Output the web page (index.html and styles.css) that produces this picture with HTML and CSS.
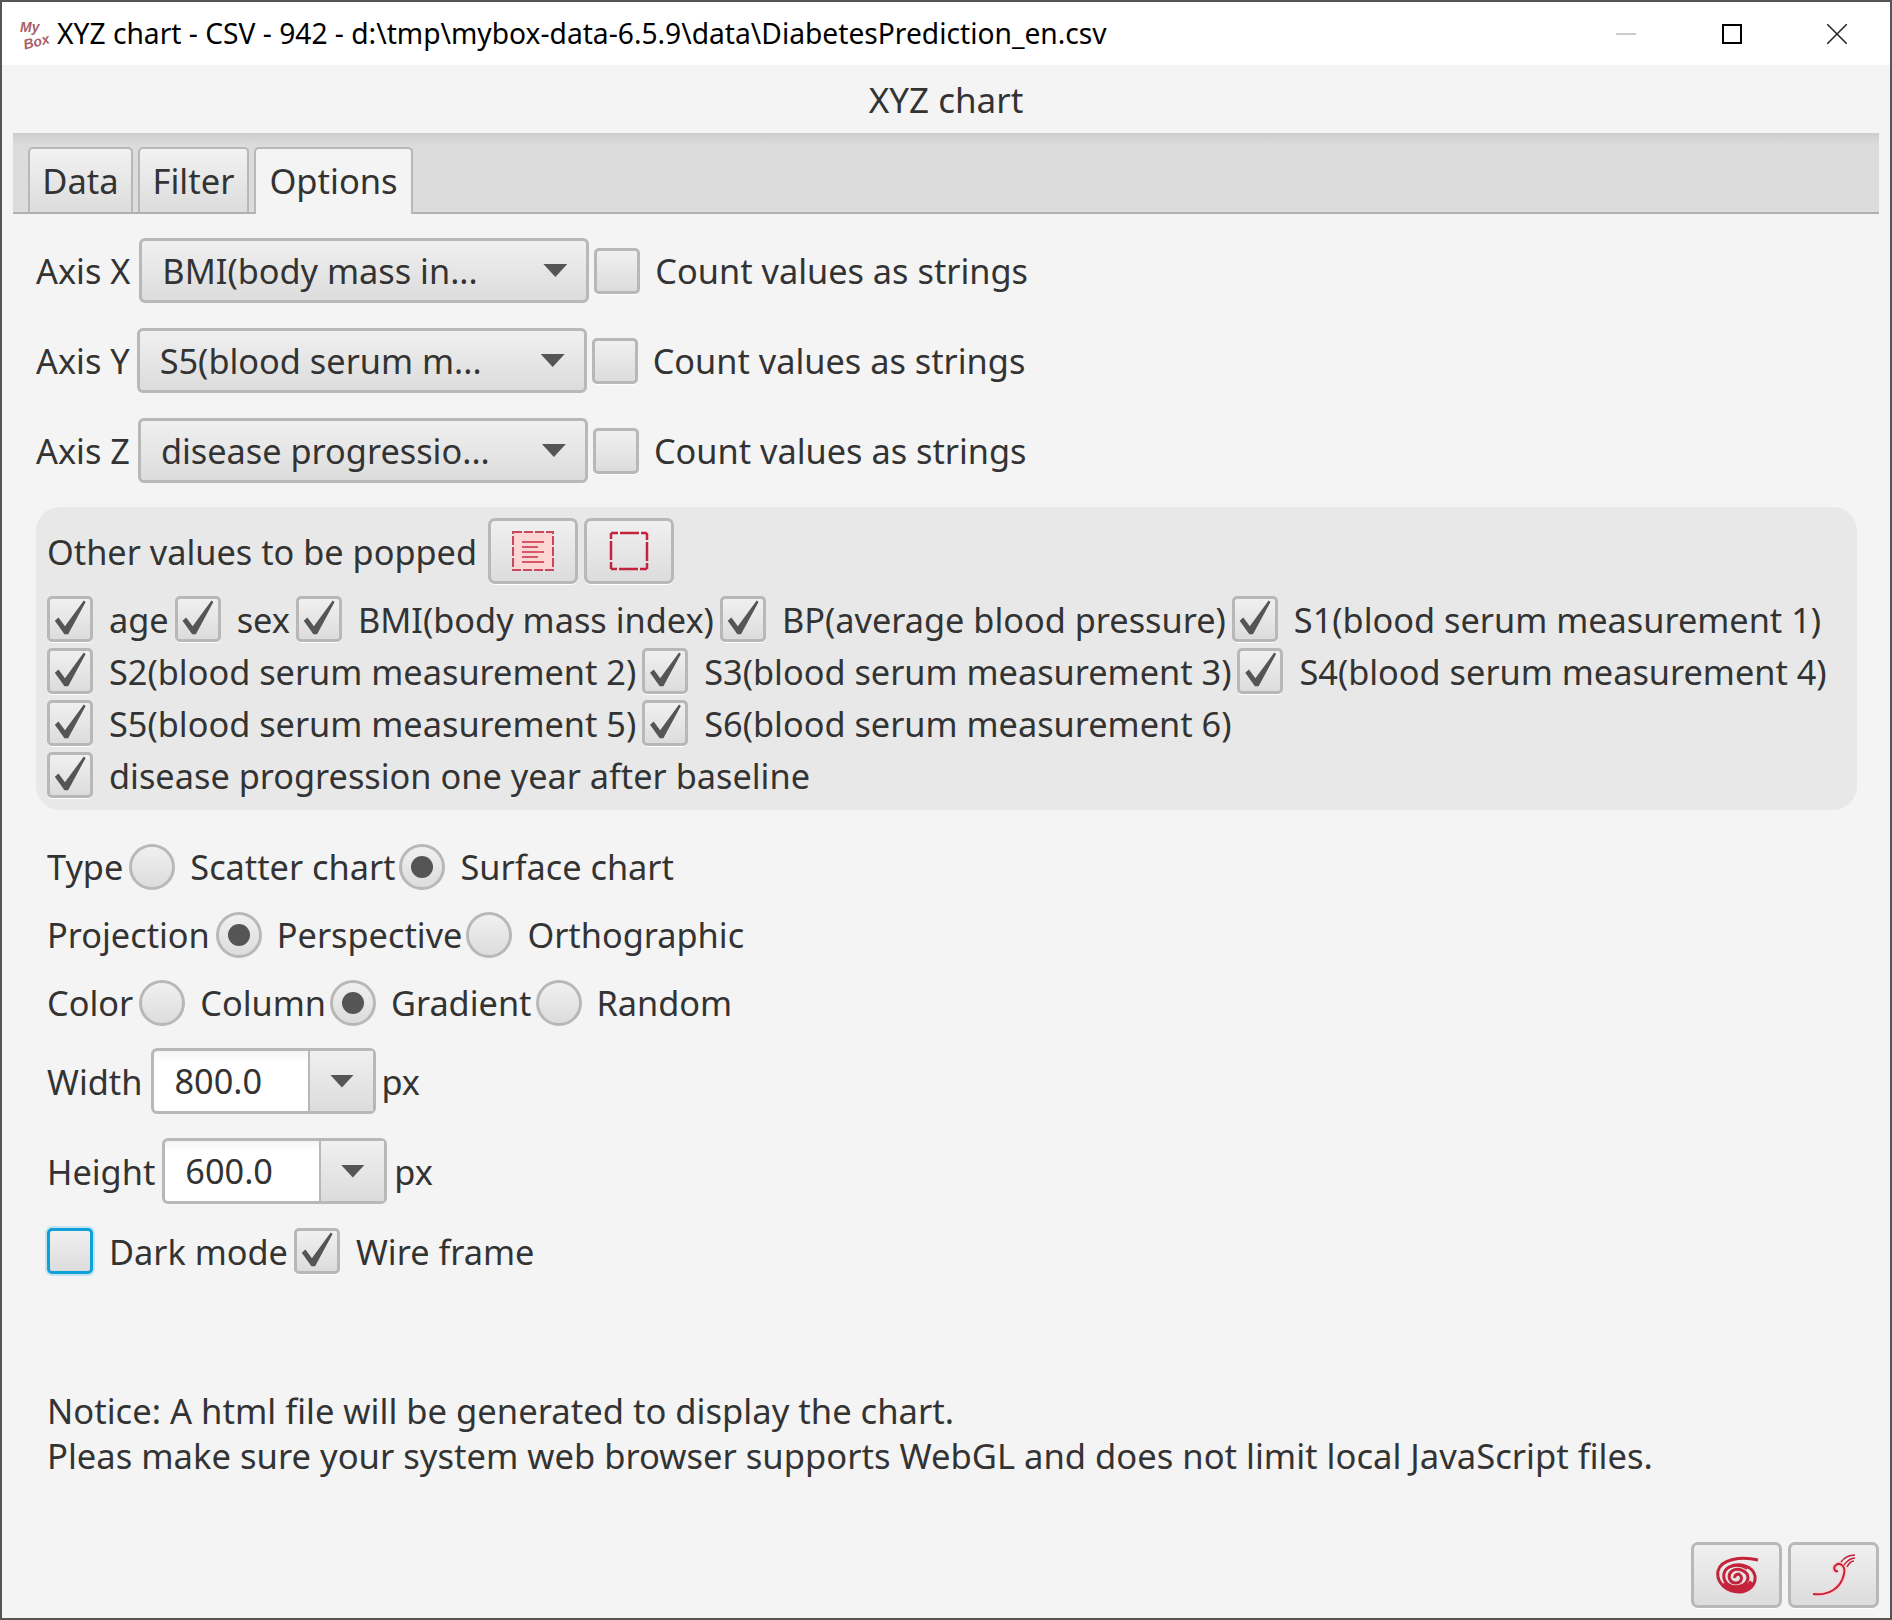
FILE: index.html
```html
<!DOCTYPE html>
<html lang="en">
<head>
  <meta charset="UTF-8">
  <title>XYZ chart</title>
  <link rel="stylesheet" href="styles.css">
</head>
<body>
  <div class="window">
    <div class="titlebar">
      <div class="logo"><span>My</span><span class="logo-b">Box</span></div>
      <div class="title">XYZ chart - CSV - 942 - d:\tmp\mybox-data-6.5.9\data\DiabetesPrediction_en.csv</div>
      <div class="winbtns">
        <svg width="20" height="20"><rect x="0" y="9" width="20" height="2" fill="#cccccc"/></svg>
        <svg width="20" height="20"><rect x="1" y="1" width="18" height="18" fill="none" stroke="#000" stroke-width="2"/></svg>
        <svg width="20" height="20"><path d="M0 0L20 20M20 0L0 20" stroke="#222" stroke-width="1.5"/></svg>
      </div>
    </div>

    <div class="heading">XYZ chart</div>

    <div class="tabbar">
      <div class="tab tab-data">Data</div>
      <div class="tab tab-filter">Filter</div>
      <div class="tab tab-active">Options</div>
    </div>

    <div class="options">
      <div class="axis-row">
        <span class="lbl">Axis X</span>
        <div class="combo"><span class="combo-text">BMI(body mass in...</span><i class="arrow"></i></div>
        <i class="box"></i>
        <span class="box-lbl">Count values as strings</span>
      </div>
      <div class="axis-row axis-y">
        <span class="lbl">Axis Y</span>
        <div class="combo"><span class="combo-text">S5(blood serum m...</span><i class="arrow"></i></div>
        <i class="box"></i>
        <span class="box-lbl">Count values as strings</span>
      </div>
      <div class="axis-row axis-z">
        <span class="lbl">Axis Z</span>
        <div class="combo"><span class="combo-text">disease progressio...</span><i class="arrow"></i></div>
        <i class="box"></i>
        <span class="box-lbl">Count values as strings</span>
      </div>

      <div class="panel">
        <div class="panel-head">
          <span class="lbl">Other values to be popped</span>
          <button class="btn">
            <svg width="42" height="40" viewBox="0 0 42 40">
              <rect x="1" y="1" width="40" height="38" fill="#fdd5d2" stroke="#c9485c" stroke-width="2" stroke-dasharray="9 2"/>
              <path d="M10 11H32M10 16H26M10 21H32M10 26H26M10 31H32" stroke="#c9304a" stroke-width="1.5"/>
            </svg>
          </button>
          <button class="btn">
            <svg width="40" height="40" viewBox="0 0 40 40">
              <rect x="2" y="2" width="36" height="36" fill="none" stroke="#c4233c" stroke-width="2.5" stroke-dasharray="7 2 19 2 6 0"/>
            </svg>
          </button>
        </div>
        <div class="check-row">
          <i class="box on"></i><span class="box-lbl">age</span>
          <i class="box on"></i><span class="box-lbl">sex</span>
          <i class="box on"></i><span class="box-lbl">BMI(body mass index)</span>
          <i class="box on"></i><span class="box-lbl">BP(average blood pressure)</span>
          <i class="box on"></i><span class="box-lbl">S1(blood serum measurement 1)</span>
        </div>
        <div class="check-row">
          <i class="box on"></i><span class="box-lbl">S2(blood serum measurement 2)</span>
          <i class="box on"></i><span class="box-lbl">S3(blood serum measurement 3)</span>
          <i class="box on"></i><span class="box-lbl">S4(blood serum measurement 4)</span>
        </div>
        <div class="check-row">
          <i class="box on"></i><span class="box-lbl">S5(blood serum measurement 5)</span>
          <i class="box on"></i><span class="box-lbl">S6(blood serum measurement 6)</span>
        </div>
        <div class="check-row">
          <i class="box on"></i><span class="box-lbl">disease progression one year after baseline</span>
        </div>
      </div>

      <div class="form">
        <div class="radio-row first">
          <span class="lbl">Type</span>
          <i class="radio"></i><span class="box-lbl">Scatter chart</span>
          <i class="radio on"></i><span class="box-lbl">Surface chart</span>
        </div>
        <div class="radio-row">
          <span class="lbl">Projection</span>
          <i class="radio on"></i><span class="box-lbl">Perspective</span>
          <i class="radio"></i><span class="box-lbl">Orthographic</span>
        </div>
        <div class="radio-row">
          <span class="lbl">Color</span>
          <i class="radio"></i><span class="box-lbl">Column</span>
          <i class="radio on"></i><span class="box-lbl">Gradient</span>
          <i class="radio"></i><span class="box-lbl">Random</span>
        </div>
        <div class="size-row size-w">
          <span class="lbl">Width</span>
          <div class="spinner"><span class="spin-val">800.0</span><span class="spin-btn"><i class="arrow"></i></span></div>
          <span class="lbl">px</span>
        </div>
        <div class="size-row">
          <span class="lbl">Height</span>
          <div class="spinner"><span class="spin-val">600.0</span><span class="spin-btn"><i class="arrow"></i></span></div>
          <span class="lbl">px</span>
        </div>
        <div class="check-row last">
          <i class="box focused"></i><span class="box-lbl">Dark mode</span>
          <i class="box on"></i><span class="box-lbl">Wire frame</span>
        </div>
        <p class="notice">Notice: A html file will be generated to display the chart.<br>Pleas make sure your system web browser supports WebGL and does not limit local JavaScript files.</p>
      </div>
    </div>

    <div class="footer">
      <button class="btn btn-foot">
        <svg width="44" height="38" viewBox="0 0 44 38">
          <path d="M43 4C26 0 6 3 3 15C1 27 12 36 24 36C35 36 41 28 40 20C38 10 24 6 14 11C7 15 7 25 14 29C21 33 32 30 33 22C33 15 23 11 17 15C12 19 14 27 21 27C26 27 28 22 25 19C23 17 19 19 20 22" fill="none" stroke="#c4233c" stroke-width="3"/>
          <path d="M8 28C14 35 30 36 37 26" fill="none" stroke="#c4233c" stroke-width="5"/>
          <path d="M9 20C9 11 22 7 32 13" fill="none" stroke="#c4233c" stroke-width="1.5"/>
        </svg>
      </button>
      <button class="btn btn-foot">
        <svg width="46" height="46" viewBox="0 0 46 46">
          <path d="M2 42C18 44 30 36 33 22C35 14 29 10 25 13C22 15 23 20 27 19" fill="none" stroke="#fdd0cf" stroke-width="5"/>
          <path d="M2 42C18 44 30 36 33 22C35 14 29 10 25 13C22 15 23 20 27 19" fill="none" stroke="#c4233c" stroke-width="2"/>
          <path d="M30 10C33 6 38 3 44 3M33 13C36 9 39 6 44 6M36 15C38 11 40 9 43 9" fill="none" stroke="#c4233c" stroke-width="1.6"/>
        </svg>
      </button>
    </div>
  </div>
</body>
</html>
```

FILE: styles.css
```css
* {
  box-sizing: border-box;
}
body {
  margin: 0;
  font-family: "Noto Sans", "Open Sans", sans-serif;
  color: #333;
}
.window {
  width: 1892px;
  height: 1620px;
  border: 2px solid #555;
  background-color: #f4f4f4;
  display: flex;
  flex-direction: column;
}

/* title bar */
.titlebar {
  height: 63px;
  background: #fff;
  display: flex;
  align-items: center;
  padding-left: 18px;
  padding-right: 43px;
  color: #000;
  flex-shrink: 0;
}
.logo {
  width: 34px;
  margin-right: 3px;
  font-family: "Liberation Sans", sans-serif;
  font-style: italic;
  font-weight: bold;
  font-size: 14px;
  line-height: 14px;
  color: #a8606a;
  display: flex;
  flex-direction: column;
}
.logo-b {
  margin-left: 3px;
  transform: rotate(-14deg);
}
.title {
  font-size: 28.2px;
  margin-top: -2px;
}
.winbtns {
  margin-left: auto;
  display: flex;
  gap: 85.5px;
}
.heading {
  height: 68px;
  line-height: 70px;
  text-align: center;
  font-size: 35px;
  flex-shrink: 0;
}

/* tabs */
.tabbar {
  height: 81px;
  margin: 0 11px;
  padding-left: 15px;
  background: linear-gradient(#cdcdcd, #dcdcdc 12px);
  border-bottom: 2px solid #b0b0b0;
  display: flex;
  align-items: flex-end;
  gap: 5px;
  flex-shrink: 0;
}
.tab {
  height: 65px;
  line-height: 63px;
  text-align: center;
  font-size: 34.5px;
  border: 2px solid #b8b8b8;
  border-bottom: none;
  border-radius: 5px 5px 0 0;
  background: linear-gradient(#f2f2f2, #dcdcdc);
}
.tab-data {
  width: 105px;
}
.tab-filter {
  width: 111px;
}
.tab-active {
  width: 159px;
  height: 67px;
  margin-bottom: -2px;
  background: #f4f4f4;
}

/* options pane */
.options {
  padding: 24px 33px 0 34px;
  flex-shrink: 0;
}
.lbl, .box-lbl, .combo-text, .spin-val {
  font-size: 34.3px;
  white-space: nowrap;
}
.axis-row {
  display: flex;
  align-items: center;
  height: 65px;
  margin-bottom: 25px;
  gap: 6px;
}
.axis-row .lbl {
  margin-right: 3px;
}
.axis-y .combo {
  margin-left: -2px;
}
.axis-z .combo {
  margin-left: -1px;
}
.axis-row .box-lbl {
  margin-left: 9px;
}
.combo {
  width: 450px;
  height: 65px;
  margin-right: -1px;
  border: 3px solid #b8b8b8;
  border-radius: 6px;
  background: linear-gradient(#f0f0f0, #dcdcdc);
  display: flex;
  align-items: center;
  justify-content: space-between;
  padding: 0 19px 0 20px;
}
.arrow {
  width: 24px;
  height: 13px;
  background: #555;
  clip-path: polygon(0 0, 100% 0, 50% 100%);
}

.box {
  position: relative;
  width: 46px;
  height: 46px;
  flex-shrink: 0;
  border: 3px solid #b8b8b8;
  border-radius: 5px;
  background: linear-gradient(#f0f0f0, #dcdcdc);
  box-shadow: 0 1px 0 #fff;
}
.box.on::after {
  content: "";
  position: absolute;
  inset: -3px;
  background: #555;
  clip-path: polygon(17% 54%, 25% 47%, 39% 66%, 80% 10%, 84% 13%, 46% 83%, 38% 83%);
}
.box.focused {
  border-color: #0fa0d8;
  box-shadow: 0 0 0 2px #c5e4f1;
}

/* popped values */
.panel {
  height: 303px;
  margin-top: -1px;
  padding: 11px 11px 0;
  background: #e8e8e8;
  border-radius: 24px;
}
.panel-head {
  display: flex;
  align-items: center;
  gap: 6px;
  margin-bottom: 12px;
}
.panel-head .lbl {
  margin-right: 5px;
}
.btn {
  width: 90px;
  height: 66px;
  padding: 0;
  border: 3px solid #b8b8b8;
  border-radius: 7px;
  background: linear-gradient(#f0f0f0, #dcdcdc);
  display: flex;
  align-items: center;
  justify-content: center;
  box-shadow: 0 1px 0 #fff;
}
.check-row {
  display: flex;
  align-items: center;
  height: 46px;
  margin-bottom: 6px;
}
.box-lbl {
  margin-left: 16px;
  margin-right: 6px;
}

/* radios and sizes */
.form {
  padding-left: 11px;
}
.radio-row {
  display: flex;
  align-items: center;
  height: 45px;
  margin-bottom: 23px;
}
.radio-row.first {
  margin-top: 34px;
}
.radio-row .lbl {
  margin-right: 6px;
}
.radio-row .box-lbl {
  margin-left: 15px;
  margin-right: 4px;
}
.radio {
  position: relative;
  width: 46px;
  height: 46px;
  flex-shrink: 0;
  border: 3px solid #b8b8b8;
  border-radius: 50%;
  background: linear-gradient(#f0f0f0, #dcdcdc);
}
.radio.on::after {
  content: "";
  position: absolute;
  top: 9px;
  left: 9px;
  width: 22px;
  height: 22px;
  border-radius: 50%;
  background: #555;
}
.size-row {
  display: flex;
  align-items: center;
  height: 66px;
  margin-bottom: 24px;
  gap: 7px;
}
.size-w .spinner {
  margin: 0 -2px 0 2px;
}
.spinner {
  width: 225px;
  height: 66px;
  border: 3px solid #b8b8b8;
  border-radius: 6px;
  background: linear-gradient(#f4f4f4, #fff 10px);
  display: flex;
}
.spin-val {
  flex: 1;
  line-height: 60px;
  padding-left: 20px;
}
.spin-btn {
  width: 65px;
  border-left: 2px solid #b8b8b8;
  background: linear-gradient(#f0f0f0, #dcdcdc);
  display: flex;
  align-items: center;
  justify-content: center;
}
.check-row.last {
  margin-bottom: 0;
}
.notice {
  margin: 115px 0 0;
  font-size: 34.6px;
  line-height: 44.5px;
  white-space: nowrap;
}

/* bottom buttons */
.footer {
  margin-top: auto;
  display: flex;
  justify-content: flex-end;
  gap: 6px;
  padding: 0 11px 10px 0;
}
.btn-foot {
  width: 91px;
}
```
